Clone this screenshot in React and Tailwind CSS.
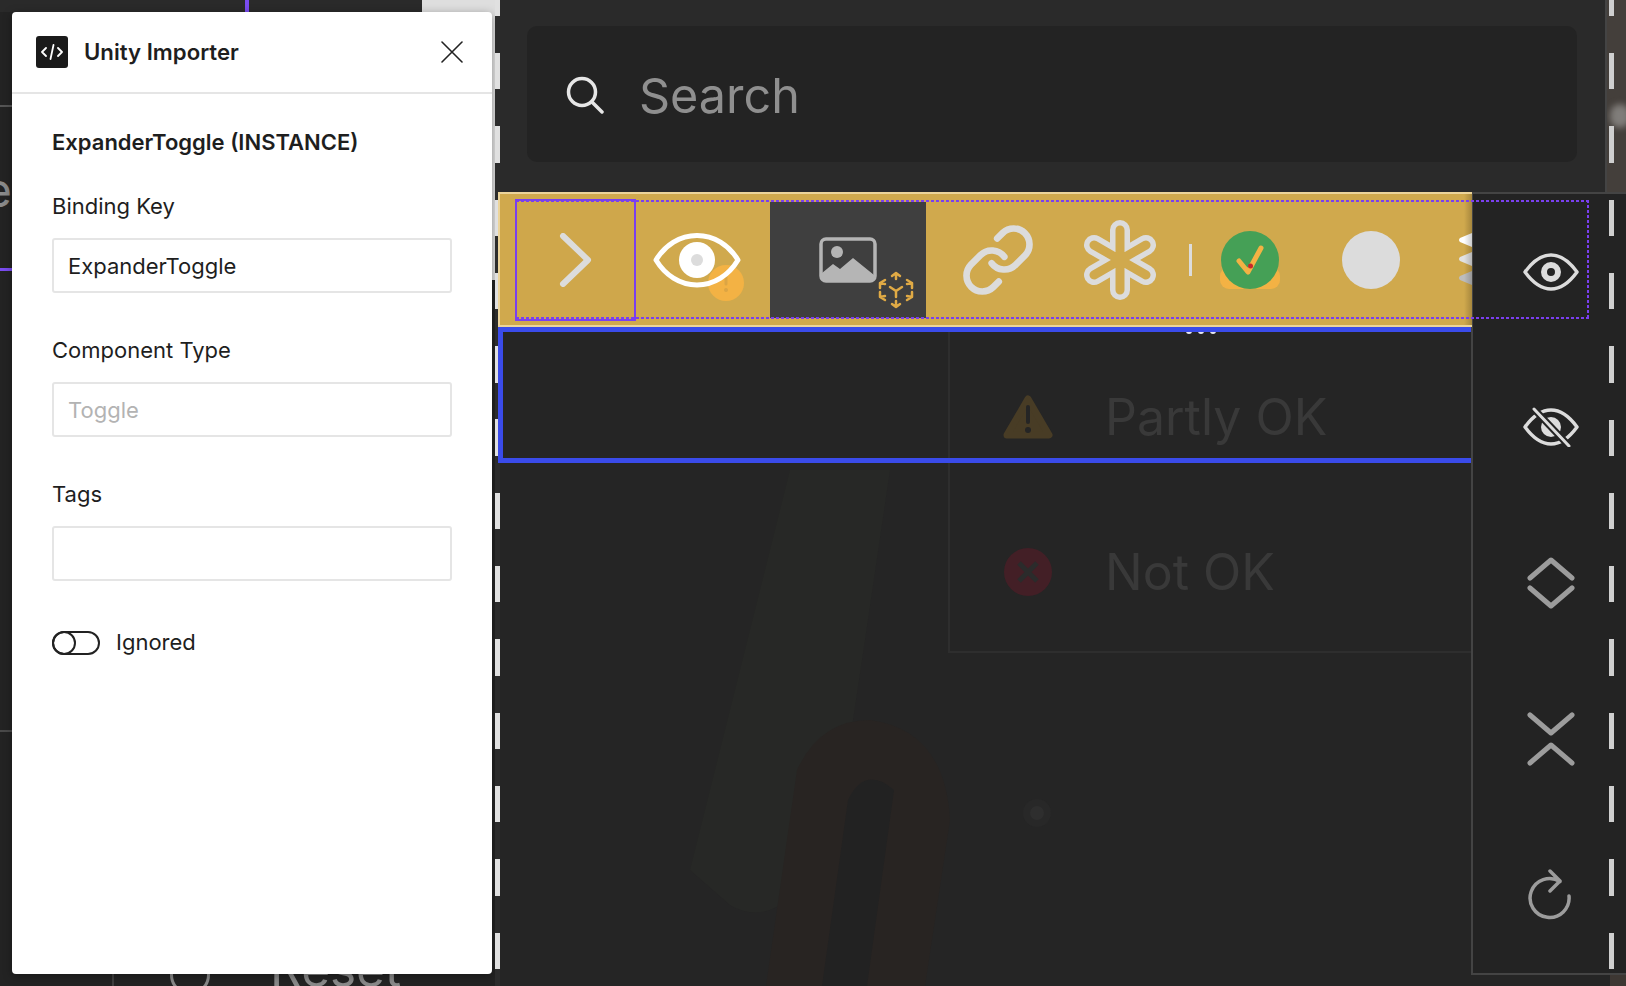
import React from "react";
import { Link } from "lucide-react";

const Field = ({ label, value, placeholder }) => (
  <div className="flex flex-col">
    <label className="h-[30px] text-[22px] leading-[30px] text-[#1e1e1e]">{label}</label>
    <input
      readOnly
      defaultValue={value}
      placeholder={placeholder}
      className="mt-[17px] h-[55px] w-[400px] rounded-[3px] border-2 border-[#e5e5e5] bg-white pl-[14px] text-[22px] text-[#1e1e1e] outline-none placeholder:text-[#b3b3b3]"
    />
  </div>
);

const Panel = () => (
  <div className="absolute left-[12px] top-[12px] z-20 flex h-[962px] w-[480px] flex-col rounded-[4px] bg-white shadow-[0_2px_10px_rgba(0,0,0,0.35)]">
    <div className="flex h-[82px] shrink-0 items-center border-b-2 border-[#e5e5e5] pl-[24px] pr-[29px]">
      <div className="flex h-[32px] w-[32px] items-center justify-center rounded-[3px] bg-[#1a1a1a]">
        <svg width="24" height="16" viewBox="0 0 24 16" fill="none" stroke="#fff" strokeWidth="1.8" strokeLinecap="round" strokeLinejoin="round">
          <path d="M6 4 2 8l4 4M18 4l4 4-4 4M13.500 1l-3 14" />
        </svg>
      </div>
      <div className="ml-[16px] flex-1 text-[22.2px] font-semibold text-[#1e1e1e]">Unity Importer</div>
      <svg width="22" height="22" viewBox="0 0 22 22" stroke="#222" strokeWidth="1.6" strokeLinecap="round">
        <path d="M1 1l20 20M21 1 1 21" />
      </svg>
    </div>
    <div className="flex flex-col pl-[40px] pt-[33px]">
      <div className="h-[30px] text-[22px] font-semibold leading-[30px] text-[#1e1e1e]">ExpanderToggle (INSTANCE)</div>
      <div className="mt-[34px] flex flex-col gap-[42px]">
        <Field label="Binding Key" value="ExpanderToggle" />
        <Field label="Component Type" placeholder="Toggle" />
        <Field label="Tags" />
      </div>
      <div className="mt-[45px] flex items-center gap-[16px]">
        <div className="relative h-[24px] w-[48px] rounded-full border-2 border-[#222]">
          <div className="absolute -left-[2px] -top-[2px] h-[24px] w-[24px] rounded-full border-2 border-[#222]" />
        </div>
        <span className="text-[22px] text-[#1e1e1e]">Ignored</span>
      </div>
    </div>
  </div>
);

const LeftCanvas = () => (
  <div className="relative h-full w-[495px] shrink-0 overflow-hidden bg-[#232323]">
    <div className="absolute left-0 top-0 h-[12px] w-[422px] bg-[#2a2a2a]" />
    <div className="absolute left-[245px] top-0 h-[12px] w-[4px] bg-[#7a4cf0]" />
    <div className="absolute left-[422px] top-0 h-[280px] w-[73px] bg-[#dedede]" />
    <div className="absolute left-0 top-[105px] h-[2px] w-[12px] bg-[#555]" />
    <div className="absolute left-0 top-[268px] h-[3px] w-[12px] bg-[#7a4cf0]" />
    <div className="absolute left-0 top-[730px] h-[2px] w-[12px] bg-[#4a4a4a]" />
    <div className="absolute -left-[16px] top-[160px] text-[48px] leading-[60px] text-[#8a8a8a]">e</div>
    <div className="absolute left-[112px] top-[974px] h-[12px] w-[2px] bg-[#3f3f3f]" />
    <div className="absolute left-[170px] top-[955px] h-[40px] w-[40px] rounded-full border-[3px] border-[#8a8a8a]" />
    <div className="absolute left-[270px] top-[939px] text-[49.5px] leading-[60px] text-[#8a8a8a]">Reset</div>
    <Panel />
  </div>
);

const GoldEye = () => (
  <svg width="100" height="76" viewBox="0 0 100 76" fill="none">
    <circle cx="79" cy="50" r="18" fill="#f3b244" />
    <path d="M79 39v12" stroke="#dca544" strokeWidth="3" strokeLinecap="round" />
    <circle cx="79" cy="57" r="2" fill="#dca544" />
    <path d="M9 27C18 12 33 2.500 50 2.500S82 12 91 27C82 42 67 52 50 52S18 42 9 27Z" stroke="#fff" strokeWidth="5" strokeLinejoin="round" />
    <circle cx="50" cy="27" r="18" fill="#fff" />
    <circle cx="50" cy="27" r="6" fill="#dcdcdc" />
  </svg>
);

const ImageCube = () => (
  <div className="relative flex h-[116px] w-[156px] shrink-0 items-center justify-center bg-[#3f3f3f]">
    <svg width="58" height="46" viewBox="0 0 58 46" className="absolute left-[49px] top-[35px]">
      <rect x="2" y="2" width="54" height="42" rx="5" fill="none" stroke="#b5b5b5" strokeWidth="3.500" />
      <circle cx="18" cy="15" r="6" fill="#b5b5b5" />
      <path d="M3 36 14 27l7 5 13-11 21 17v4a2 2 0 0 1-2 2H5a2 2 0 0 1-2-2Z" fill="#b5b5b5" />
    </svg>
    <svg width="36" height="38" viewBox="0 0 36 38" className="absolute left-[108px] top-[69px]" fill="none" stroke="#e0aa45" strokeWidth="2.500" strokeLinecap="round" strokeLinejoin="round">
      <path d="M18 2v6M14 5l4-3 4 3" />
      <path d="M18 36v-6M14 33l4 3 4-3" />
      <path d="M2 12v5M2 12l5-3M7 13l-5-1" />
      <path d="M34 12v5M34 12l-5-3M29 13l5-1" />
      <path d="M2 26v-5M2 26l5 3M7 25l-5 1" />
      <path d="M34 26v-5M34 26l-5 3M29 25l5 1" />
      <path d="M18 20v6M18 20l-6-4M18 20l6-4" />
    </svg>
  </div>
);

const Asterisk = () => (
  <svg width="84" height="84" viewBox="-42 -42 84 84" fill="none" strokeLinecap="round">
    <g stroke="#dcdcdc" strokeWidth="20">
      <path d="M0-30V30M-26-15 26 15M-26 15 26-15" />
    </g>
    <g stroke="#d0a94d" strokeWidth="9">
      <path d="M0-30V30M-26-15 26 15M-26 15 26-15" />
    </g>
  </svg>
);

const Check = () => (
  <div className="relative h-[60px] w-[60px]">
    <div className="absolute bottom-[1px] left-0 h-[22px] w-[60px] rounded-[9px] bg-[#f3b244]" />
    <svg width="60" height="60" viewBox="0 0 60 60" className="absolute left-0 top-0">
      <circle cx="30" cy="30" r="29" fill="#45a056" />
      <path d="M19 31l9 11 13-24" fill="none" stroke="#f3b244" strokeWidth="5" strokeLinecap="round" strokeLinejoin="round" />
      <circle cx="30.500" cy="36" r="2.500" fill="#c6282b" />
    </svg>
  </div>
);

const Stack = () => (
  <svg width="14" height="54" viewBox="0 0 14 54" className="ml-[5px] shrink-0">
    <path d="M14 0V14L2 9Q0 7 2 5Z" fill="#fff" />
    <path d="M14 19V33L2 28Q0 26 2 24Z" fill="#e2e2e2" />
    <path d="M14 38V52L2 47Q0 45 2 43Z" fill="#bdbdbd" />
  </svg>
);

const GoldBar = () => (
  <div className="relative -ml-[2px] flex h-[135px] w-[974px] items-center overflow-hidden border-x-2 border-y-2 border-r-0 border-[#ecd49a] bg-[#d0a94d] pl-[15px]">
    <div className="flex h-[122px] w-[121px] shrink-0 items-center justify-center border-2 border-[#7a3ff0] bg-[#cfa74b]">
      <svg width="34" height="54" viewBox="0 0 34 54" fill="none" stroke="#dcdcdc" strokeWidth="6" strokeLinecap="round" strokeLinejoin="round">
        <path d="M4 3l25 24L4 51" />
      </svg>
    </div>
    <div className="flex w-[134px] shrink-0 items-center justify-center pr-[12px] pt-[22px]"><GoldEye /></div>
    <ImageCube />
    <div className="flex w-[144px] shrink-0 items-center justify-center"><Link size={76} color="#dcdcdc" strokeWidth={2.100} /></div>
    <div className="flex w-[100px] shrink-0 items-center justify-center"><Asterisk /></div>
    <div className="flex w-[40px] shrink-0 items-center justify-center"><div className="h-[32px] w-[3px] bg-[#dcdcdc]" /></div>
    <div className="flex w-[79px] shrink-0 items-center justify-center"><Check /></div>
    <div className="flex w-[164px] shrink-0 items-center justify-center"><div className="h-[58px] w-[58px] rounded-full bg-[#dcdcdc]" /></div>
    <Stack />
    <div className="absolute right-0 top-0 h-full w-[8px] bg-gradient-to-r from-transparent to-[#00000033]" />
  </div>
);

const StatusRows = () => (
  <div className="relative ml-[448px] mt-[5px] h-[321px] border-b-2 border-l-2 border-[#2e2e2e] bg-[#252525] pl-[53px] pt-[7px]">
    <div className="flex h-[155px] items-center">
      <svg width="50" height="46" viewBox="0 0 50 46" className="shrink-0">
        <path d="M25 5 46 41H4Z" fill="#483c25" stroke="#483c25" strokeWidth="7" strokeLinejoin="round" />
        <path d="M25 13v15" stroke="#252525" strokeWidth="4" strokeLinecap="round" />
        <circle cx="25" cy="36" r="3" fill="#252525" />
      </svg>
      <span className="ml-[52px] text-[50px] leading-none text-[#393939]">Partly OK</span>
    </div>
    <div className="flex h-[155px] items-center">
      <svg width="50" height="50" viewBox="0 0 50 50" className="shrink-0">
        <circle cx="25" cy="25" r="24" fill="#431f26" />
        <path d="M16 16l18 18M34 16 16 34" stroke="#2b2b2b" strokeWidth="5" />
      </svg>
      <span className="ml-[52px] text-[50px] leading-none text-[#393939]">Not OK</span>
    </div>
    <div className="absolute left-[236px] -top-[4px] flex gap-[6px]">
      <span className="h-[6px] w-[6px] rounded-full bg-[#e8e8f0]" />
      <span className="h-[6px] w-[6px] rounded-full bg-[#e8e8f0]" />
      <span className="h-[6px] w-[6px] rounded-full bg-[#e8e8f0]" />
    </div>
  </div>
);

const DockItem = ({ children, className = "" }) => (
  <div className={`flex h-[155px] w-[156px] items-center justify-center ${className}`}>{children}</div>
);

const Dock = () => (
  <div className="flex flex-1 flex-col">
    <div className="h-[783px] border-b-2 border-l-2 border-t-2 border-[#444] bg-[#232323]">
      <DockItem>
        <svg width="56" height="38" viewBox="0 0 56 38" fill="none">
          <path d="M2 19C10 8 18 2 28 2S46 8 54 19C46 30 38 36 28 36S10 30 2 19Z" stroke="#dcdcdc" strokeWidth="3.500" strokeLinejoin="round" />
          <circle cx="28" cy="19" r="7" stroke="#dcdcdc" strokeWidth="6" />
        </svg>
      </DockItem>
      <DockItem>
        <svg width="56" height="40" viewBox="0 0 56 40" fill="none">
          <path d="M2 20C10 9 18 3 28 3S46 9 54 20C46 31 38 37 28 37S10 31 2 20Z" stroke="#dcdcdc" strokeWidth="3.500" strokeLinejoin="round" />
          <circle cx="28" cy="20" r="10" fill="#dcdcdc" />
          <path d="M11 2l35 37" stroke="#232323" strokeWidth="7" />
          <path d="M11 2l35 37" stroke="#dcdcdc" strokeWidth="3" strokeLinecap="round" />
        </svg>
      </DockItem>
      <DockItem className="mt-[1px]">
        <svg width="48" height="52" viewBox="0 0 48 52" fill="none" stroke="#9c9c9c" strokeWidth="5" strokeLinecap="round" strokeLinejoin="round">
          <path d="M3 21 24 3l21 18M3 31l21 18 21-18" />
        </svg>
      </DockItem>
      <DockItem className="mt-[1px]">
        <svg width="48" height="54" viewBox="0 0 48 54" fill="none" stroke="#9c9c9c" strokeWidth="5" strokeLinecap="round" strokeLinejoin="round">
          <path d="M3 3l21 18L45 3M3 51l21-18 21 18" />
        </svg>
      </DockItem>
      <DockItem className="mt-[1px]">
        <svg width="44" height="52" viewBox="0 0 44 52" fill="none" stroke="#9c9c9c" strokeWidth="3.500" strokeLinecap="round" strokeLinejoin="round" className="-ml-[2px]">
          <path d="M41 27A19.500 19.500 0 1 1 32 12.500M22 2l10 10-10 10" />
        </svg>
      </DockItem>
    </div>
    <div className="flex h-[11px] justify-end bg-[#252525]"><div className="h-full w-[19px] bg-[#3d3733]" /></div>
  </div>
);

const DottedFrame = () => (
  <div className="absolute left-[16px] top-[8px] h-[119px] w-[1073px]">
    <div className="absolute left-0 top-0 h-[2px] w-full bg-[repeating-linear-gradient(to_right,#7a3ff0_0,#7a3ff0_3px,transparent_3px,transparent_5px)]" />
    <div className="absolute bottom-0 left-0 h-[2px] w-full bg-[repeating-linear-gradient(to_right,#7a3ff0_0,#7a3ff0_3px,transparent_3px,transparent_5px)]" />
    <div className="absolute right-0 top-0 h-full w-[2px] bg-[repeating-linear-gradient(to_bottom,#7a3ff0_0,#7a3ff0_3px,transparent_3px,transparent_5px)]" />
  </div>
);

export default function App() {
  return (
    <div className="relative isolate flex h-[986px] w-full overflow-hidden bg-[#252525] font-['Inter',sans-serif]">
      <svg width="300" height="346" viewBox="0 0 300 346" className="absolute left-[700px] top-[640px] -z-10 overflow-visible" fill="none">
        <path d="M90-170H190L165 0 150 100 80 265Q55 280 30 265L-10 230Z" fill="#272826" />
        <path d="M66 346 97 130Q120 80 170 80 245 90 250 180L225 346Z" fill="#282422" />
        <path d="M122 346 148 160Q165 125 194 150L167 346Z" fill="#222" />
        <circle cx="337" cy="173" r="14" fill="#282828" />
        <circle cx="337" cy="173" r="7" fill="#2e2e2e" />
      </svg>
      <LeftCanvas />
      <div className="h-full w-[5px] shrink-0 bg-[repeating-linear-gradient(to_bottom,#e0e0e0_0,#e0e0e0_16px,#2c2c2c_16px,#2c2c2c_53px,#e0e0e0_53px,#e0e0e0_73.3px)]" />
      <div className="flex h-full min-w-0 flex-1 flex-col">
        <div className="flex h-[192px] shrink-0">
          <div className="flex w-[1107px] items-start border-r-2 border-[#444] bg-[#2a2a2a] pl-[27px] pr-[28px] pt-[26px]">
            <div className="flex h-[136px] w-[1051px] items-center rounded-[10px] bg-[#232323] pl-[39px] pt-[2px]">
              <svg width="38" height="38" viewBox="0 0 38 38" fill="none" stroke="#e6e6e6" strokeWidth="3.500" strokeLinecap="round">
                <circle cx="16" cy="16" r="13.500" />
                <path d="M26 26l10 10" />
              </svg>
              <span className="ml-[35px] mt-[2px] text-[48.5px] leading-none text-[#8f8f8f]">Search</span>
            </div>
          </div>
          <div className="relative flex-1 overflow-hidden bg-[#443f3b]">
            <div className="absolute left-[3px] top-[104px] h-[24px] w-[20px] rounded-full bg-[#807d7a] blur-[3px]" />
          </div>
        </div>
        <div className="relative flex min-h-0 flex-1">
          <div className="relative w-[971px] shrink-0">
            <GoldBar />
            <StatusRows />
            <div className="absolute -left-[2px] top-[135px] h-[136px] w-[973px] border-y-[5px] border-l-[5px] border-[#3a4bea]" />
          </div>
          <Dock />
          <DottedFrame />
        </div>
      </div>
      <div className="absolute left-[1609px] top-0 h-[975px] w-[5px] bg-[repeating-linear-gradient(to_bottom,#cfcfcf_0,#cfcfcf_16px,transparent_16px,transparent_53px,#cfcfcf_53px,#cfcfcf_73.3px)]" />
    </div>
  );
}
